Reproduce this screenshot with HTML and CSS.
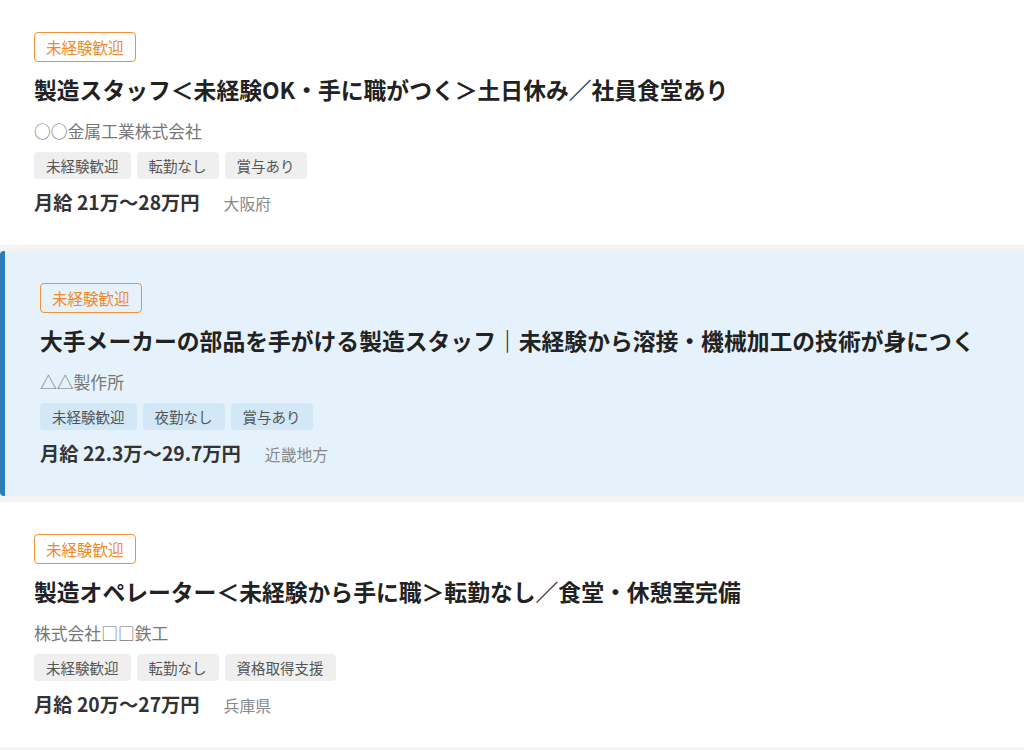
FILE: index.html
```html
<!DOCTYPE html>
<html lang="ja">
<head>
    <meta charset="UTF-8">
    <meta name="viewport" content="width=device-width, initial-scale=1.0">
    <title>求人一覧</title>
    <link rel="stylesheet" href="styles.css">
</head>
<body>
    <div class="job-list">
        <div class="job-card">
            <span class="badge">未経験歓迎</span>
            <h2 class="job-title">製造スタッフ＜未経験OK・手に職がつく＞土日休み／社員食堂あり</h2>
            <p class="company">○○金属工業株式会社</p>
            <div class="tags">
                <span class="tag">未経験歓迎</span>
                <span class="tag">転勤なし</span>
                <span class="tag">賞与あり</span>
            </div>
            <div class="meta">
                <span class="salary">月給 21万〜28万円</span>
                <span class="location">大阪府</span>
            </div>
        </div>
        <div class="job-card active">
            <span class="badge">未経験歓迎</span>
            <h2 class="job-title">大手メーカーの部品を手がける製造スタッフ｜未経験から溶接・機械加工の技術が身につく</h2>
            <p class="company">△△製作所</p>
            <div class="tags">
                <span class="tag">未経験歓迎</span>
                <span class="tag">夜勤なし</span>
                <span class="tag">賞与あり</span>
            </div>
            <div class="meta">
                <span class="salary">月給 22.3万〜29.7万円</span>
                <span class="location">近畿地方</span>
            </div>
        </div>
        <div class="job-card">
            <span class="badge">未経験歓迎</span>
            <h2 class="job-title">製造オペレーター＜未経験から手に職＞転勤なし／食堂・休憩室完備</h2>
            <p class="company">株式会社□□鉄工</p>
            <div class="tags">
                <span class="tag">未経験歓迎</span>
                <span class="tag">転勤なし</span>
                <span class="tag">資格取得支援</span>
            </div>
            <div class="meta">
                <span class="salary">月給 20万〜27万円</span>
                <span class="location">兵庫県</span>
            </div>
        </div>
    </div>
</body>
</html>
```

FILE: styles.css
```css
body {
    font-family: "Noto Sans CJK JP", "Noto Sans", sans-serif;
    margin: 0;
    background: #f3f3f3;
    color: #333;
}
.job-list {
    display: flex;
    flex-direction: column;
    gap: 6px;
}
.job-card {
    background: #fff;
    padding: 32px 34px 28px;
    display: flex;
    flex-direction: column;
    align-items: flex-start;
}
.job-card.active {
    background: #e6f2fb;
    border-left: 5px solid #2a7db8;
    border-radius: 4px 0 0 4px;
    padding-left: 35px;
}
.badge {
    border: 1.5px solid #f0913a;
    border-radius: 4px;
    color: #ee8a2e;
    font-size: 15.5px;
    line-height: 28px;
    padding: 0 11px;
}
.job-title {
    font-size: 22.8px;
    font-weight: 700;
    color: #222;
    margin: 12px 0 0;
    line-height: 32px;
}
.company {
    font-size: 16.8px;
    color: #777;
    margin: 13px 0 0;
    line-height: 24px;
}
.tags {
    display: flex;
    gap: 6px;
    margin-top: 9px;
}
.tag {
    background: #efefef;
    color: #555;
    font-size: 14.5px;
    line-height: 27px;
    padding: 0 12px;
    border-radius: 4px;
}
.active .tag {
    background: #d3e8f6;
}
.meta {
    display: flex;
    align-items: baseline;
    gap: 24px;
    margin-top: 10px;
    line-height: 26px;
}
.salary {
    font-size: 19.3px;
    font-weight: 700;
    color: #333;
}
.location {
    font-size: 15.8px;
    color: #888;
}
```
